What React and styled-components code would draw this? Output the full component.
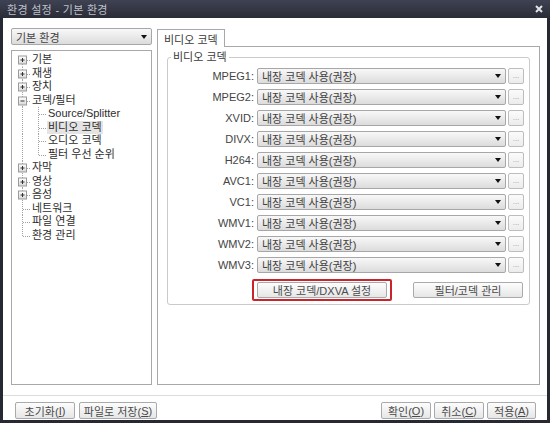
import React from 'react';
import styled, { createGlobalStyle } from 'styled-components';

const Global = createGlobalStyle`
  html, body { margin: 0; padding: 0; background: #fff; }
  body {
    font-family: "Liberation Sans", "Noto Sans CJK KR", sans-serif;
    font-size: 11px;
    color: #3a3a3a;
  }
  * { box-sizing: border-box; }
`;

const Window = styled.div`
  width: 550px;
  height: 423px;
  display: flex;
  flex-direction: column;
  background: #262833;
  padding: 0 3px 3px;
`;

const TitleBar = styled.div`
  height: 18px;
  margin: 0 -3px;
  padding: 0 7px 0 7px;
  display: flex;
  align-items: center;
  justify-content: space-between;
  background: linear-gradient(#3f4252, #2a2c37);
  color: #bfc1cb;
  font-size: 11px;
  letter-spacing: 0.3px;
`;

const Body = styled.div`
  flex: 1;
  background: #fff;
  display: flex;
  flex-direction: column;
`;

const Main = styled.div`
  height: 367px;
  display: flex;
  gap: 5px;
  padding: 10px 7px 0 8px;
`;

const LeftCol = styled.div`
  width: 141px;
  display: flex;
  flex-direction: column;
  gap: 5px;
`;

const RightCol = styled.div`
  flex: 1;
  display: flex;
  flex-direction: column;
`;

const DropBox = styled.div`
  height: ${p => p.$h || 16}px;
  display: flex;
  align-items: center;
  justify-content: space-between;
  padding: 0 4px 0 ${p => p.$pl || 4}px;
  border: 1px solid #a7a7a7;
  border-radius: 2px;
  background: linear-gradient(#f8f8f8, #dcdcdc);
  color: #424242;
  font-size: 11px;
  white-space: nowrap;
`;

const Arrow = styled.span`
  width: 0;
  height: 0;
  border-left: 3.5px solid transparent;
  border-right: 3.5px solid transparent;
  border-top: 4px solid #111;
`;

const Tree = styled.div`
  flex: 1;
  border: 1px solid #a8a8a8;
  padding: 2px 0 0 2px;
  display: flex;
  flex-direction: column;
`;

const TreeRow = styled.div`
  height: 13.5px;
  display: flex;
  align-items: center;
  white-space: nowrap;
`;

const TreeLabel = styled.span`
  margin-left: 1px;
  padding: 0 1px;
  line-height: 13px;
  color: #2e2e2e;
  background: ${p => (p.$selected ? '#e4e4e4' : 'transparent')};
`;

const TabStrip = styled.div`
  display: flex;
  padding-top: 1px;
`;

const Tab = styled.div`
  height: 18px;
  padding: 0 6px;
  margin-bottom: -1px;
  border: 1px solid #a8a8a8;
  border-bottom: none;
  background: #fff;
  position: relative;
  z-index: 1;
  display: flex;
  align-items: center;
  color: #3a3a3a;
`;

const TabPanel = styled.div`
  flex: 1;
  border: 1px solid #a8a8a8;
  padding: 0 9px 0 9px;
`;

const Group = styled.div`
  position: relative;
  margin-top: 10px;
  border: 1px solid #cacaca;
  border-radius: 3px;
  padding: 10px 0 3px 0;
  display: flex;
  flex-direction: column;
  gap: 5px;
`;

const GroupTitle = styled.span`
  position: absolute;
  left: 3px;
  top: -7px;
  padding: 0 2px;
  line-height: 13px;
  background: #fff;
  color: #3a3a3a;
`;

const CodecRow = styled.div`
  display: grid;
  grid-template-columns: 86px 249px 15px;
  column-gap: 3px;
  align-items: center;
  height: 16px;
  & > :last-child { margin-left: -1px; }
`;

const CodecLabel = styled.span`
  text-align: right;
  color: #444;
`;

const MoreButton = styled.div`
  height: 16px;
  border: 1px solid #bdbdbd;
  border-radius: 2px;
  background: linear-gradient(#fbfbfb, #ececec);
  color: #9a9a9a;
  font-size: 8px;
  line-height: 14px;
  text-align: center;
`;

const ButtonRow = styled.div`
  display: flex;
  align-items: center;
  margin: 1px 0 0 84px;
  gap: 21px;
`;

const Highlight = styled.div`
  border: 2px solid #c9232c;
  border-radius: 2px;
  padding: 1px 3px;
`;

const Button = styled.div`
  width: ${p => p.$w}px;
  height: ${p => p.$h || 16}px;
  border: 1px solid #aaaaaa;
  border-radius: 2px;
  background: linear-gradient(#fdfdfd, #e6e6e6);
  color: #4a4a4a;
  font-size: 11px;
  display: flex;
  align-items: center;
  justify-content: center;
  white-space: nowrap;
`;

const Footer = styled.div`
  flex: 1;
  margin-top: 10px;
  border-top: 1px solid #dddddd;
  padding: 6px 11px 0 12px;
  display: flex;
  justify-content: space-between;
  align-items: flex-start;
`;

const ButtonGroup = styled.div`
  display: flex;
  gap: ${p => p.$gap}px;
`;

const Guide = ({ type, box }) => {
  const c = '#a3a3a3';
  const dash = '1 1';
  return (
    <svg width="16" height="13.5" viewBox="0 0 16 13.5" style={{ flex: 'none', display: 'block' }}>
      {(type === 'pipe' || type === 'tee') && (
        <line x1="8.5" y1="0" x2="8.5" y2="13.5" stroke={c} strokeDasharray={dash} />
      )}
      {type === 'start' && <line x1="8.5" y1="7" x2="8.5" y2="13.5" stroke={c} strokeDasharray={dash} />}
      {type === 'end' && <line x1="8.5" y1="0" x2="8.5" y2="7" stroke={c} strokeDasharray={dash} />}
      {type !== 'pipe' && <line x1="9" y1="7.5" x2="16" y2="7.5" stroke={c} strokeDasharray={dash} />}
      {box && (
        <g>
          <defs>
            <linearGradient id="bx" x1="0" y1="0" x2="0" y2="1">
              <stop offset="0" stopColor="#ffffff" />
              <stop offset="1" stopColor="#d8d8d8" />
            </linearGradient>
          </defs>
          <rect x="4.5" y="3" width="8" height="8" fill="url(#bx)" stroke="#9a9a9a" />
          <line x1="6.5" y1="7" x2="10.5" y2="7" stroke="#333" />
          {box === 'plus' && <line x1="8.5" y1="5" x2="8.5" y2="9" stroke="#333" />}
        </g>
      )}
    </svg>
  );
};

const treeItems = [
  { label: '기본', guides: ['start'], box: 'plus' },
  { label: '재생', guides: ['tee'], box: 'plus' },
  { label: '장치', guides: ['tee'], box: 'plus' },
  { label: '코덱/필터', guides: ['tee'], box: 'minus' },
  { label: 'Source/Splitter', guides: ['pipe', 'tee'] },
  { label: '비디오 코덱', guides: ['pipe', 'tee'], selected: true },
  { label: '오디오 코덱', guides: ['pipe', 'tee'] },
  { label: '필터 우선 순위', guides: ['pipe', 'end'] },
  { label: '자막', guides: ['tee'], box: 'plus' },
  { label: '영상', guides: ['tee'], box: 'plus' },
  { label: '음성', guides: ['tee'], box: 'plus' },
  { label: '네트워크', guides: ['tee'] },
  { label: '파일 연결', guides: ['tee'] },
  { label: '환경 관리', guides: ['end'] },
];

const codecs = ['MPEG1', 'MPEG2', 'XVID', 'DIVX', 'H264', 'AVC1', 'VC1', 'WMV1', 'WMV2', 'WMV3'];

export default function App() {
  return (
    <>
      <Global />
      <Window>
        <TitleBar>
          <span>환경 설정 - 기본 환경</span>
          <svg width="8" height="8" viewBox="0 0 8 8">
            <path d="M1 1 L7 7 M7 1 L1 7" stroke="#e2e3e8" strokeWidth="2" />
          </svg>
        </TitleBar>
        <Body>
          <Main>
            <LeftCol>
              <DropBox $h={17} $pl={4}>
                <span>기본 환경</span>
                <Arrow />
              </DropBox>
              <Tree>
                {treeItems.map(item => (
                  <TreeRow key={item.label}>
                    {item.guides.map((g, i) => (
                      <Guide key={i} type={g} box={i === item.guides.length - 1 ? item.box : undefined} />
                    ))}
                    <TreeLabel $selected={item.selected}>{item.label}</TreeLabel>
                  </TreeRow>
                ))}
              </Tree>
            </LeftCol>
            <RightCol>
              <TabStrip>
                <Tab>비디오 코덱</Tab>
              </TabStrip>
              <TabPanel>
                <Group>
                  <GroupTitle>비디오 코덱</GroupTitle>
                  {codecs.map(c => (
                    <CodecRow key={c}>
                      <CodecLabel>{c}:</CodecLabel>
                      <DropBox $pl={4}>
                        <span>내장 코덱 사용(권장)</span>
                        <Arrow />
                      </DropBox>
                      <MoreButton>...</MoreButton>
                    </CodecRow>
                  ))}
                  <ButtonRow>
                    <Highlight>
                      <Button $w={130}>내장 코덱/DXVA 설정</Button>
                    </Highlight>
                    <Button $w={110}>필터/코덱 관리</Button>
                  </ButtonRow>
                </Group>
              </TabPanel>
            </RightCol>
          </Main>
          <Footer>
            <ButtonGroup $gap={4}>
              <Button $w={60} $h={17}>초기화(<u>I</u>)</Button>
              <Button $w={78} $h={17}>파일로 저장(<u>S</u>)</Button>
            </ButtonGroup>
            <ButtonGroup $gap={3}>
              <Button $w={50} $h={17}>확인(<u>O</u>)</Button>
              <Button $w={50} $h={17}>취소(<u>C</u>)</Button>
              <Button $w={49} $h={17}>적용(<u>A</u>)</Button>
            </ButtonGroup>
          </Footer>
        </Body>
      </Window>
    </>
  );
}
